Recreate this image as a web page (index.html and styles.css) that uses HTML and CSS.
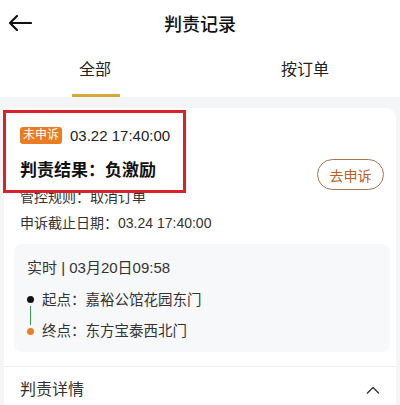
FILE: index.html
```html
<!DOCTYPE html>
<html lang="zh-CN">
<head>
    <meta charset="UTF-8">
    <meta name="viewport" content="width=device-width, initial-scale=1.0">
    <title>判责记录</title>
    <link rel="stylesheet" href="styles.css">
</head>
<body>
    <div class="top-bar">
        <div class="back-btn">
            <svg width="24" height="16" viewBox="0 0 24 16">
                <path d="M23 8H2M9 1L2 8l7 7" fill="none" stroke="#111" stroke-width="2.2" stroke-linecap="round" stroke-linejoin="round"/>
            </svg>
        </div>
        <div class="page-title">判责记录</div>
        <div class="top-spacer"></div>
    </div>

    <div class="tabs">
        <div class="tab tab-active">全部</div>
        <div class="tab tab-order">按订单</div>
    </div>

    <div class="record-card">
        <div class="mark-box"></div>

        <div class="record-head">
            <span class="badge">未申诉</span>
            <span class="record-time">03.22 17:40:00</span>
        </div>

        <div class="result-row">
            <div class="result-text">判责结果：负激励</div>
            <button class="appeal-btn">去申诉</button>
        </div>

        <div class="info-line">管控规则：取消订单</div>
        <div class="info-line">申诉截止日期：03.24 17:40:00</div>

        <div class="trip-box">
            <div class="trip-time">实时 | 03月20日09:58</div>
            <div class="route">
                <div class="track">
                    <span class="dot dot-start"></span>
                    <span class="track-line"></span>
                    <span class="dot dot-end"></span>
                </div>
                <div class="stops">
                    <div class="stop">起点：嘉裕公馆花园东门</div>
                    <div class="stop">终点：东方宝泰西北门</div>
                </div>
            </div>
        </div>
    </div>

    <div class="detail-card">
        <div class="detail-title">判责详情</div>
        <svg width="14" height="8" viewBox="0 0 14 8">
            <path d="M1 7.5L7 1.5l6 6" fill="none" stroke="#333" stroke-width="1.3"/>
        </svg>
    </div>
</body>
</html>
```

FILE: styles.css
```css
* {
    margin: 0;
    padding: 0;
    box-sizing: border-box;
    font-family: 'Liberation Sans', 'Noto Sans CJK SC', sans-serif;
}

body {
    width: 400px;
    background-color: #f4f5f7;
    color: #222;
}

.top-bar {
    display: flex;
    align-items: center;
    height: 45px;
    background-color: white;
}

.back-btn {
    width: 48px;
    padding-left: 8px;
    display: flex;
    align-items: center;
}

.top-spacer {
    width: 48px;
}

.page-title {
    flex: 1;
    text-align: center;
    font-size: 18px;
    font-weight: 500;
    color: #111;
}

.tabs {
    display: flex;
    height: 52px;
    background-color: white;
}

.tab {
    flex: 1;
    font-size: 16px;
    line-height: 50px;
    text-align: center;
    color: #222;
    position: relative;
}

.tab-active {
    padding-right: 8px;
}

.tab-active::after {
    content: '';
    position: absolute;
    left: 72px;
    bottom: 0;
    width: 48px;
    height: 3px;
    background-color: #d9a63a;
}

.tab-order {
    padding-left: 12px;
}

.record-card {
    position: relative;
    margin: 11px 4px 0;
    padding: 19px 12px 14px 16px;
    background-color: white;
    border-radius: 10px 10px 0 0;
    border-bottom: 1px solid #eeeff1;
}

.mark-box {
    position: absolute;
    left: -1px;
    top: 2px;
    width: 183px;
    height: 83px;
    border: 3px solid #d8232a;
}

.record-head {
    display: flex;
    align-items: center;
    gap: 8px;
    height: 17px;
}

.badge {
    background-color: #e87d22;
    color: white;
    font-size: 12px;
    line-height: 17px;
    padding: 0 3px;
    border-radius: 3px;
}

.record-time {
    font-size: 15px;
    color: #222;
}

.result-row {
    display: flex;
    justify-content: space-between;
    align-items: flex-start;
    height: 28px;
    margin-top: 15px;
}

.result-text {
    font-size: 17px;
    font-weight: bold;
    line-height: 24px;
    color: #111;
}

.appeal-btn {
    width: 67px;
    height: 31px;
    border: 1px solid #a8754f;
    border-radius: 16px;
    background-color: white;
    color: #b9601c;
    font-size: 14px;
}

.info-line {
    font-size: 14px;
    line-height: 20px;
    color: #333;
    margin-bottom: 6px;
}

.trip-box {
    margin: 11px -6px 0;
    padding: 14px 13px 11px;
    background-color: #f7f8fa;
    border-radius: 8px;
}

.trip-time {
    font-size: 15px;
    line-height: 20px;
    color: #333;
}

.route {
    display: flex;
    gap: 8px;
    margin-top: 12px;
}

.track {
    display: flex;
    flex-direction: column;
    align-items: center;
    padding: 6px 0;
    width: 7px;
}

.dot {
    width: 7px;
    height: 7px;
    border-radius: 50%;
}

.dot-start {
    background-color: #111;
}

.dot-end {
    background-color: #e8801f;
}

.track-line {
    flex: 1;
    width: 1px;
    margin: 3px 0;
    background-color: #3d9a4a;
}

.stops {
    display: flex;
    flex-direction: column;
    gap: 11px;
}

.stop {
    font-size: 14.5px;
    line-height: 20px;
    color: #333;
}

.detail-card {
    display: flex;
    justify-content: space-between;
    align-items: center;
    margin: 0 4px;
    padding: 12px 16px 12px 16px;
    background-color: white;
}

.detail-title {
    font-size: 16px;
    line-height: 22px;
    color: #333;
}
```
